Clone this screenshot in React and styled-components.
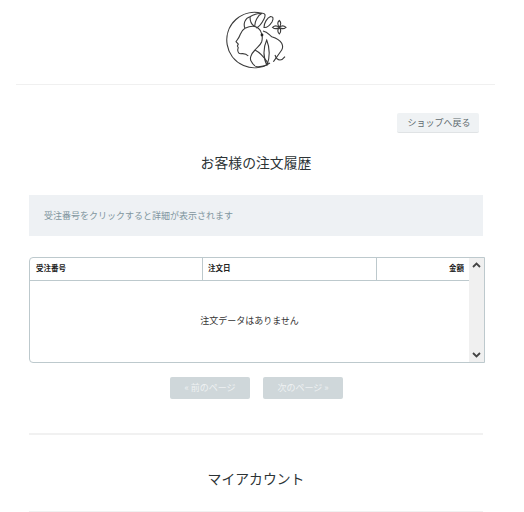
import React from 'react';
import styled, { createGlobalStyle } from 'styled-components';

const GlobalStyle = createGlobalStyle`
  html, body {
    margin: 0;
    background: #fff;
    font-family: 'Noto Sans CJK JP', 'Noto Sans', sans-serif;
    overflow: hidden;
  }
`;

const Page = styled.div`
  width: 524px;
  height: 512px;
  overflow: hidden;
`;

const Header = styled.header`
  margin: 0 29px 0 16px;
  height: 85px;
  border-bottom: 1px solid #f0f0f0;
  display: flex;
  justify-content: center;
  padding: 10px 0 0 3px;
  box-sizing: border-box;
`;

const Main = styled.main`
  width: 454px;
  margin-left: 29px;
`;

const TopRow = styled.div`
  display: flex;
  justify-content: flex-end;
  padding: 28px 4px 0 0;
`;

const ShopButton = styled.button`
  width: 82px;
  height: 20px;
  padding: 0 0 1px 2px;
  border: 0;
  border-bottom: 1px solid #e0e3e5;
  border-radius: 2px;
  background: #eff2f4;
  color: #5f6b70;
  font: 9px 'Noto Sans CJK JP', sans-serif;
`;

const Title = styled.h2`
  margin: ${p => p.$top}px 0 0;
  font-size: 13.85px;
  line-height: 20px;
  font-weight: 400;
  color: #2c3335;
  text-align: center;
`;

const Notice = styled.div`
  margin-top: 23px;
  height: 41px;
  padding-left: 15px;
  display: flex;
  align-items: center;
  background: #eef1f4;
  color: #7f959e;
  font-size: 9px;
`;

const TableBox = styled.div`
  margin-top: 21px;
  width: 456px;
  height: 106px;
  box-sizing: border-box;
  border: 1px solid #bdc9cd;
  border-radius: 4px 0 0 4px;
  display: flex;
`;

const TableBody = styled.div`
  flex: 1;
  display: flex;
  flex-direction: column;
`;

const HeadRow = styled.div`
  height: 22px;
  display: grid;
  grid-template-columns: 172px 174px 1fr;
  border-bottom: 1px solid #bdc9cd;
`;

const HeadCell = styled.div`
  display: flex;
  align-items: center;
  justify-content: ${p => (p.$right ? 'flex-end' : 'flex-start')};
  padding: 0 5px 3px ${p => (p.$first ? 6 : 5)}px;
  border-left: ${p => (p.$first ? '0' : '1px solid #bdc9cd')};
  font-size: 7.5px;
  font-weight: 700;
  color: #222;
`;

const Empty = styled.div`
  flex: 1;
  display: flex;
  align-items: center;
  justify-content: center;
  padding-bottom: 2px;
  font-size: 9px;
  color: #333;
`;

const Scrollbar = styled.div`
  width: 15px;
  background: #f0f0f0;
  display: flex;
  flex-direction: column;
  justify-content: space-between;
  align-items: center;
  padding: 4px 0;
  box-sizing: border-box;
`;

const Pager = styled.div`
  display: flex;
  justify-content: center;
  gap: 13px;
  margin-top: 14px;
  padding-left: 1px;
`;

const PageButton = styled.button`
  width: 80px;
  height: 22px;
  padding: 0 0 1px;
  border: 0;
  border-radius: 2px;
  background: #cfd7da;
  color: #eef1f2;
  font: 9px 'Noto Sans CJK JP', sans-serif;
`;

const Rule = styled.hr`
  margin: ${p => p.$top}px 0 0;
  border: 0;
  border-top: 2px solid #f1f1f1;
`;

const Logo = () => (
  <svg width="62" height="62" viewBox="0 0 62 62" fill="none" stroke="#3a3a3a" strokeWidth="1.1">
    {/* ring */}
    <path d="M35.7 3.3 A27.7 27.7 0 1 0 44 53" />
    {/* face profile */}
    <path d="M19 18.3 C16 20 15 23 14 25 C13 28 11 30 10 31.7 L12.3 34 L11.4 36 L12.2 37.5 L11.7 40 C12 43 13 44 16 43.6 C19 43.4 21 44.5 22.3 46" />
    {/* hair */}
    <path d="M19 18.3 C17 14 19 8 24 6.7 C27 4.5 32 3.5 35.7 3.3" />
    <path d="M19 18.3 C24 16 29 15.5 32.3 18.3 C36 21 37 27 35.7 31.7 C34 36 31 37 29 40 C25 44 23 49 25.7 52 C27 55 30 57 32.3 56.7 C37 56.5 41 55 42.3 53.3" />
    <path d="M24 6.7 C24 10 25 14 28 16 M29 17 C28 12 32 5 36 3.3 C39 3 40 5 38 9 C36 13 33 17 30 18" />
    <path d="M38 17.5 C38 13 41 8 44.5 6.5 C47 6.5 48 8 46 12 C44 15 41 18 38 17.5 Z" />
    {/* back curls and tail */}
    <path d="M37 21 C42 22 43 25 45.7 26.7 C50 28 54 30 55.7 33.3 C57 36 57 38 55.7 40 C53 44 50 48 47.3 51.7" />
    <path d="M40.7 30 C37 38 37 48 41 55 C44 48 44 38 40.7 30 Z" />
    <path d="M29 40 C33 42 38 47 42 53" />
    <path d="M49 45 C50 48 52 50 54 50 C56 50 58 48 59 46.7" />
    {/* star */}
    <path d="M53.3 17.3 C51 14 51.5 12 53.3 10.5 C55 12 55.5 14 53.3 17.3 C56 15 58 15.5 60 17.3 C58 19 56 19.5 53.3 17.3 C55.5 20 55 22 53.3 24 C51.5 22 51 20 53.3 17.3 C50.5 19.5 48.5 19 46.5 17.3 C48.5 15.5 50.5 15 53.3 17.3 Z" />
    <circle cx="36" cy="25" r="1.4" fill="#222" stroke="none" />
  </svg>
);

const Chevron = ({ up }) => (
  <svg width="9" height="6" viewBox="0 0 9 6" fill="none" stroke="#444" strokeWidth="1.8">
    <path d={up ? 'M1 5 L4.5 1.5 L8 5' : 'M1 1 L4.5 4.5 L8 1'} />
  </svg>
);

const App = () => (
  <Page>
    <GlobalStyle />
    <Header>
      <Logo />
    </Header>
    <Main>
      <TopRow>
        <ShopButton>ショップへ戻る</ShopButton>
      </TopRow>
      <Title $top={19}>お客様の注文履歴</Title>
      <Notice>受注番号をクリックすると詳細が表示されます</Notice>
      <TableBox>
        <TableBody>
          <HeadRow>
            <HeadCell $first>受注番号</HeadCell>
            <HeadCell>注文日</HeadCell>
            <HeadCell $right>金額</HeadCell>
          </HeadRow>
          <Empty>注文データはありません</Empty>
        </TableBody>
        <Scrollbar>
          <Chevron up />
          <Chevron />
        </Scrollbar>
      </TableBox>
      <Pager>
        <PageButton>« 前のページ</PageButton>
        <PageButton>次のページ »</PageButton>
      </Pager>
      <Rule $top={34} />
      <Title $top={33}>マイアカウント</Title>
      <Rule $top={23} />
    </Main>
  </Page>
);

export default App;
